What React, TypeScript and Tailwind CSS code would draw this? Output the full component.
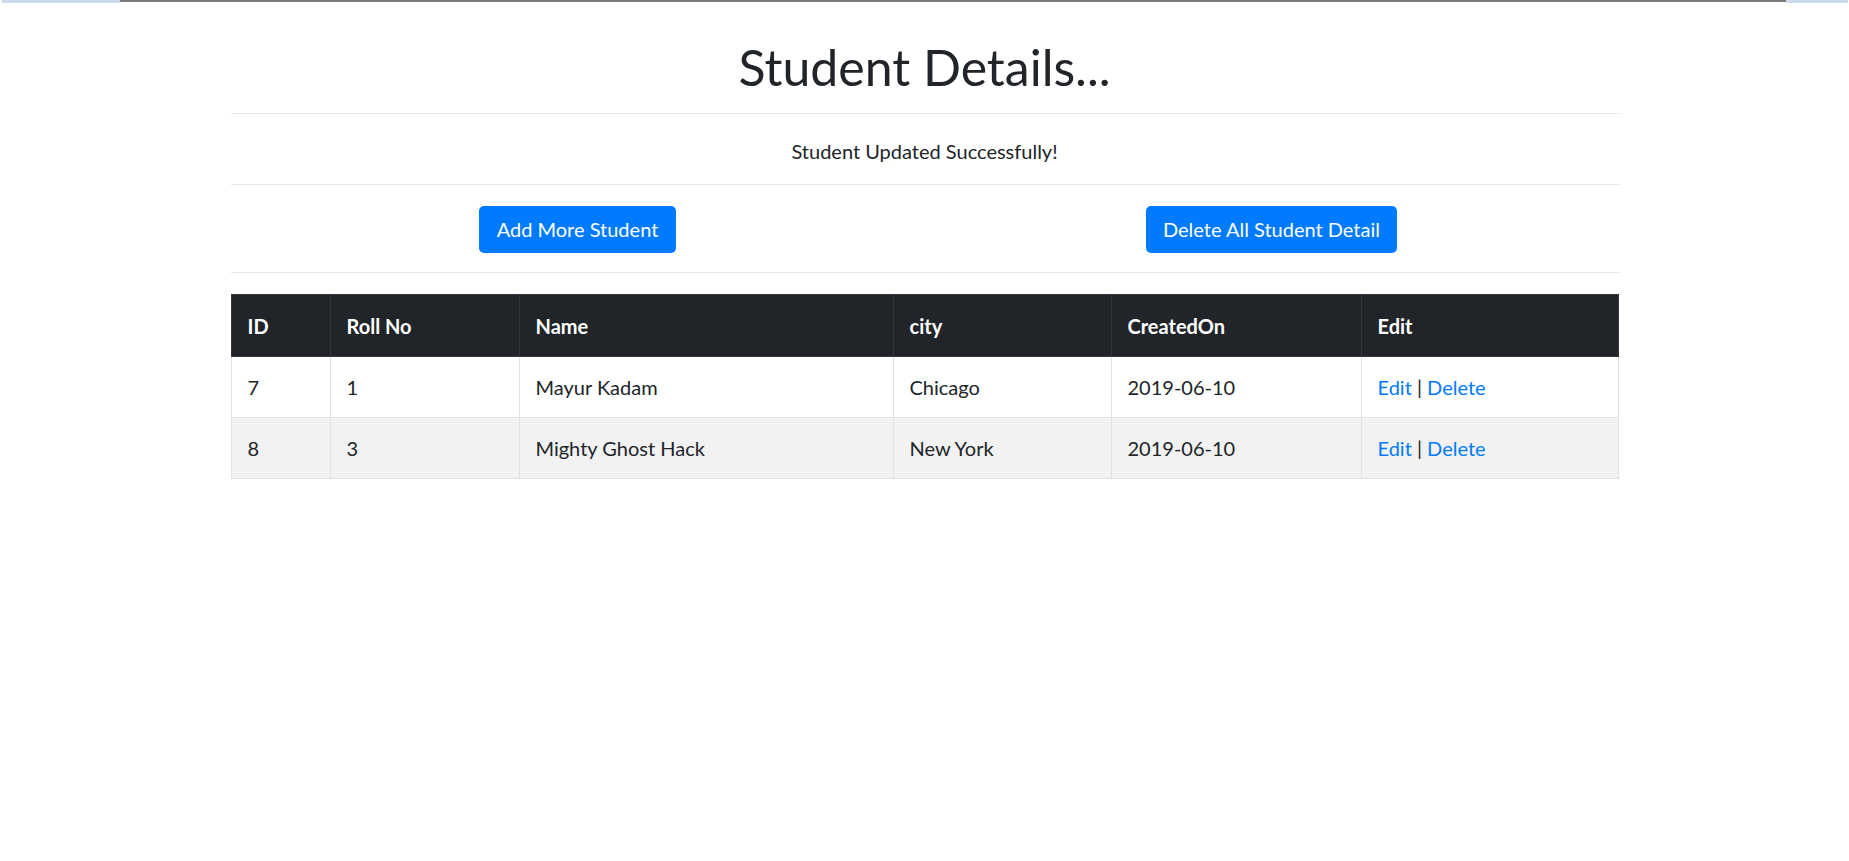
import React from "react";

const students = [
  { id: 7, roll: 1, name: "Mayur Kadam", city: "Chicago", createdOn: "2019-06-10" },
  { id: 8, roll: 3, name: "Mighty Ghost Hack", city: "New York", createdOn: "2019-06-10" },
];

const cols = ["ID", "Roll No", "Name", "city", "CreatedOn", "Edit"];

export default function App() {
  return (
    <div className="min-h-screen bg-white text-[#212529] font-['Segoe_UI','Lato',sans-serif] text-[20px] leading-[30px]">
      {/* browser strip at the very top */}
      <div className="flex h-[3px]">
        <div className="w-[2px]" />
        <div className="w-[118px] bg-[#cddcec]" />
        <div className="w-[1666px] border-t-2 border-[#7a7a7a]" />
        <div className="w-[62px] bg-[#cddcec]" />
      </div>

      <div className="mx-auto w-[1388px]">
        <h1 className="mt-[34px] text-center text-[50px] leading-[60px] font-normal">
          Student Details...
        </h1>
        <hr className="mt-[16px] border-t border-[#e5e5e5]" />

        <p className="mt-[22px] text-center">Student Updated Successfully!</p>
        <hr className="mt-[18px] border-t border-[#e5e5e5]" />

        <div className="mt-[21px] grid grid-cols-2">
          <div className="flex justify-center">
            <button className="rounded-[5px] bg-[#007bff] px-[18px] pt-[8px] pb-[9px] text-white">
              Add More Student
            </button>
          </div>
          <div className="flex justify-center">
            <button className="rounded-[5px] bg-[#007bff] px-[17px] pt-[8px] pb-[9px] text-white">
              Delete All Student Detail
            </button>
          </div>
        </div>
        <hr className="mt-[19px] border-t border-[#e5e5e5]" />

        {/* student table */}
        <table className="mt-[21px] w-full table-fixed border-collapse text-left">
          <colgroup>
            <col className="w-[99px]" />
            <col className="w-[189px]" />
            <col className="w-[374px]" />
            <col className="w-[218px]" />
            <col className="w-[250px]" />
            <col />
          </colgroup>
          <thead>
            <tr className="bg-[#212529] text-white">
              {cols.map((c) => (
                <th
                  key={c}
                  className="h-[62px] border border-[#32383e] px-[16px] font-bold"
                >
                  {c}
                </th>
              ))}
            </tr>
          </thead>
          <tbody>
            {students.map((s, i) => (
              <tr key={s.id} className={i % 2 === 1 ? "bg-[#f2f2f2]" : "bg-white"}>
                <td className="h-[61px] border border-[#dee2e6] px-[16px]">{s.id}</td>
                <td className="border border-[#dee2e6] px-[16px]">{s.roll}</td>
                <td className="border border-[#dee2e6] px-[16px]">{s.name}</td>
                <td className="border border-[#dee2e6] px-[16px]">{s.city}</td>
                <td className="border border-[#dee2e6] px-[16px]">{s.createdOn}</td>
                <td className="border border-[#dee2e6] px-[16px]">
                  <a href="#" className="text-[#007bff]">Edit</a> |{" "}
                  <a href="#" className="text-[#007bff]">Delete</a>
                </td>
              </tr>
            ))}
          </tbody>
        </table>
      </div>
    </div>
  );
}
